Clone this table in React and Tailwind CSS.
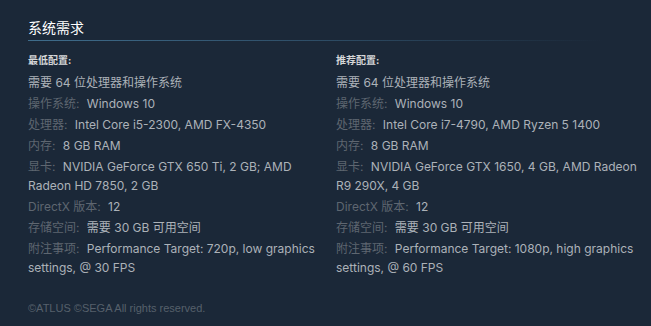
import React from 'react';

const font = { fontFamily: 'Inter, "Liberation Sans", "Noto Sans CJK SC", sans-serif' };

const minimum = [
  { value: '需要 64 位处理器和操作系统' },
  { label: '操作系统:', value: 'Windows 10' },
  { label: '处理器:', value: 'Intel Core i5-2300, AMD FX-4350' },
  { label: '内存:', value: '8 GB RAM' },
  { label: '显卡:', value: 'NVIDIA GeForce GTX 650 Ti, 2 GB; AMD Radeon HD 7850, 2 GB' },
  { label: 'DirectX 版本:', value: '12' },
  { label: '存储空间:', value: '需要 30 GB 可用空间' },
  { label: '附注事项:', value: 'Performance Target: 720p, low graphics settings, @ 30 FPS' },
];

const recommended = [
  { value: '需要 64 位处理器和操作系统' },
  { label: '操作系统:', value: 'Windows 10' },
  { label: '处理器:', value: 'Intel Core i7-4790, AMD Ryzen 5 1400' },
  { label: '内存:', value: '8 GB RAM' },
  { label: '显卡:', value: 'NVIDIA GeForce GTX 1650, 4 GB, AMD Radeon R9 290X, 4 GB' },
  { label: 'DirectX 版本:', value: '12' },
  { label: '存储空间:', value: '需要 30 GB 可用空间' },
  { label: '附注事项:', value: 'Performance Target: 1080p, high graphics settings, @ 60 FPS' },
];

const ReqColumn = ({ title, items, className }) => (
  <div className={className}>
    <div className="text-[10px] leading-[14px] font-bold text-[#d6d7d8]">{title}</div>
    <ul className="mt-[6px]">
      {items.map((item, i) => (
        <li key={i} className="text-[12px] leading-[19px] mb-[2px] text-[#acb2b8]">
          {item.label && <span className="text-[#5e6670] mr-[4px]">{item.label}</span>}
          {item.label && ' '}
          {item.value}
        </li>
      ))}
    </ul>
  </div>
);

export default function App() {
  return (
    <div className="w-full h-[326px] bg-[#1b2838] pl-[28px] pt-[19px] overflow-hidden" style={font}>
      <h2 className="text-[14px] leading-[18px] text-[#ffffff]">系统需求</h2>
      <div className="mt-[3px] h-px w-[575px] bg-gradient-to-r from-[#3f6d8c] via-[#2e4d66] to-transparent" />
      <div className="mt-[12px] flex gap-[8px]">
        <ReqColumn title="最低配置:" items={minimum} className="w-[300px] shrink-0" />
        <ReqColumn title="推荐配置:" items={recommended} className="w-[310px] shrink-0" />
      </div>
      <div
        className="mt-[22px] text-[11px] leading-[14px] text-[#56606b]"
        style={{ fontFamily: '"Liberation Sans", Arial, sans-serif' }}
      >
        ©ATLUS ©SEGA All rights reserved.
      </div>
    </div>
  );
}
